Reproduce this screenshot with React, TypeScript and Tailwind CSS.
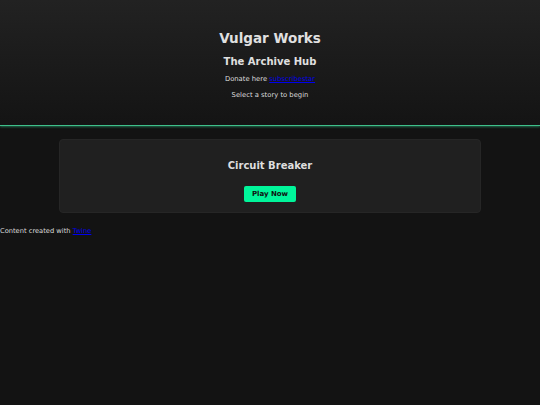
export default function App() {
  return (
    <div
      className="min-h-[405px] bg-[#131313] text-[#dcdcdc]"
      style={{ fontFamily: '"DejaVu Sans", Verdana, sans-serif' }}
    >
      <header className="flex h-[126px] flex-col items-center border-b border-[#3fbf8a] bg-gradient-to-b from-[#222222] to-[#141414] pt-[29px] text-center shadow-[0_1px_2px_rgba(40,160,110,0.6)]">
        <h1 className="text-[13.5px] font-bold leading-[18px] text-[#e0e0e0]">Vulgar Works</h1>
        <h2 className="mt-[8px] text-[10px] font-bold leading-[14px] text-[#e0e0e0]">The Archive Hub</h2>
        <p className="mt-[5px] text-[6.8px] leading-[10px]">
          Donate here{' '}
          <a href="#" className="text-[#0000ee] underline">
            subscribestar
          </a>
        </p>
        <p className="mt-[6px] text-[6.8px] leading-[10px]">Select a story to begin</p>
      </header>

      <main className="pt-[13px]">
        <div className="mx-auto flex w-[422px] flex-col items-center rounded-[4px] border border-[#262626] bg-[#202020] pb-[10px] pt-[19px]">
          <h3 className="text-[10px] font-bold leading-[13px] text-[#dedede]">Circuit Breaker</h3>
          <button
            type="button"
            className="mt-[14px] h-[16px] w-[52px] rounded-[2px] bg-[#00f59a] text-[7px] font-bold text-[#111]"
          >
            Play Now
          </button>
        </div>
        <p className="mt-[13px] text-[6.7px] leading-[10px]">
          Content created with{' '}
          <a href="#" className="text-[#0000ee] underline">
            Twine
          </a>
        </p>
      </main>
    </div>
  )
}
